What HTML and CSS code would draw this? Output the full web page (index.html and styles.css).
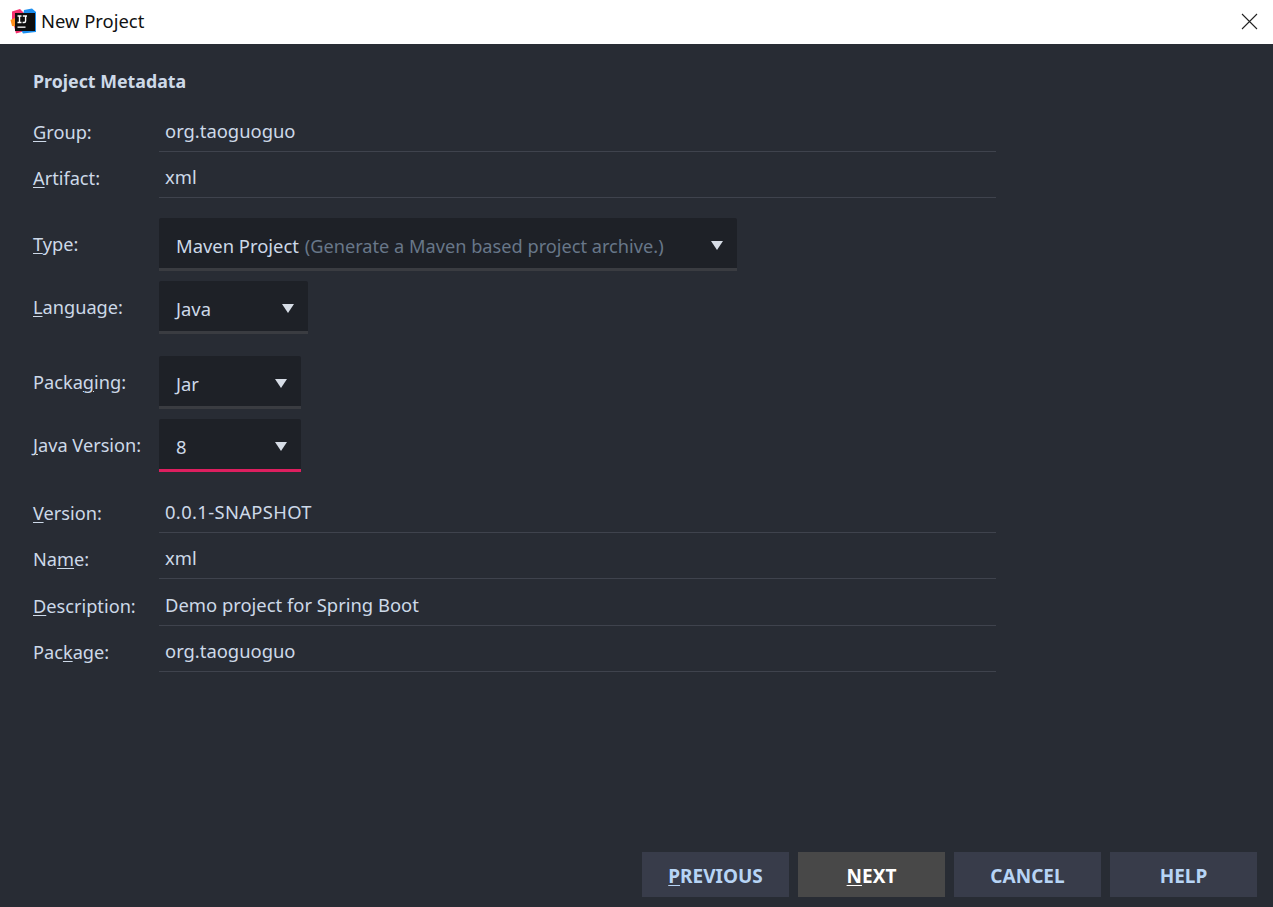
FILE: index.html
```html
<!DOCTYPE html>
<html lang="en">
<head>
<meta charset="utf-8">
<title>New Project</title>
<link rel="stylesheet" href="styles.css">
</head>
<body>
<div class="dialog">
  <header class="titlebar">
    <div class="title-left">
      <svg class="logo" width="26" height="26" viewBox="0 0 26 26">
        <path d="M2 3.5 L10 1 L15 6 L15 23 L6 25.5 L4 18 L2 12 Z" fill="#f5316f"/>
        <path d="M0.5 12 L6 9.5 L6 18.5 L2 18 Z" fill="#ff8f1c"/>
        <path d="M14 2 L22 0.5 L26 4 L26 24 L13 25.5 L11 22 Z" fill="#1c8ff0"/>
        <rect x="5" y="5" width="20" height="18" fill="#0f0f0f"/>
        <path d="M7.5 8 H11.5 M9.5 8 V14.5 M7.5 14.5 H11.5 M12.8 8 H17 M15.6 8 V13 Q15.6 14.5 14.2 14.5 H12.6" fill="none" stroke="#fff" stroke-width="1.4"/>
        <rect x="7.5" y="18.5" width="8" height="1.3" fill="#fff"/>
      </svg>
      <span class="title">New Project</span>
    </div>
    <svg class="close" width="17" height="17" viewBox="0 0 17 17"><path d="M1 1 L16 16 M16 1 L1 16" stroke="#222" stroke-width="1.1" fill="none"/></svg>
  </header>
  <main class="content">
    <h1 class="section">Project Metadata</h1>
    <div class="row field tall"><label class="lbl"><u>G</u>roup:</label><div class="input">org.taoguoguo</div></div>
    <div class="row field"><label class="lbl"><u>A</u>rtifact:</label><div class="input">xml</div></div>
    <div class="row sel-row type"><label class="lbl"><u>T</u>ype:</label><div class="select w-type"><span>Maven Project <span class="hint">(Generate a Maven based project archive.)</span></span><i class="arrow"></i></div></div>
    <div class="row sel-row lang"><label class="lbl"><u>L</u>anguage:</label><div class="select w-lang"><span>Java</span><i class="arrow"></i></div></div>
    <div class="row sel-row pack"><label class="lbl">Packa<u>g</u>ing:</label><div class="select w-pack"><span>Jar</span><i class="arrow"></i></div></div>
    <div class="row sel-row java"><label class="lbl"><u>J</u>ava Version:</label><div class="select w-pack focused"><span>8</span><i class="arrow"></i></div></div>
    <div class="row field tall version"><label class="lbl"><u>V</u>ersion:</label><div class="input caps">0.0.1-SNAPSHOT</div></div>
    <div class="row field"><label class="lbl">Na<u>m</u>e:</label><div class="input">xml</div></div>
    <div class="row field tall"><label class="lbl"><u>D</u>escription:</label><div class="input">Demo project for Spring Boot</div></div>
    <div class="row field"><label class="lbl">Pac<u>k</u>age:</label><div class="input">org.taoguoguo</div></div>
  </main>
  <footer class="actions">
    <button class="btn"><u>P</u>REVIOUS</button>
    <button class="btn primary"><u>N</u>EXT</button>
    <button class="btn">CANCEL</button>
    <button class="btn">HELP</button>
  </footer>
</div>
</body>
</html>
```
FILE: styles.css
```css
* { box-sizing: border-box; }
html, body { margin: 0; height: 100%; }
body { font-family: "Noto Sans", "Open Sans", sans-serif; font-size: 18.4px; color: #cdd9e8; background: #282c34; overflow: hidden; }
.dialog { height: 907px; display: flex; flex-direction: column; }
.titlebar { height: 44px; flex: none; background: #fff; display: flex; align-items: center; justify-content: space-between; padding: 0 15px 0 10px; }
.title-left { display: flex; align-items: center; gap: 5px; }
.logo { display: block; margin-bottom: 2px; }
.title { color: #111; font-size: 18.4px; line-height: 24px; margin-top: -3px; }
.close { display: block; margin-bottom: 2px; }
.content { flex: 1; padding: 0 0 0 33px; }
.section { margin: 24px 0 0; height: 37px; font-size: 17.8px; font-weight: 700; line-height: 26px; color: #cdd9e8; }
.row { display: flex; align-items: center; }
.lbl { width: 126px; flex: none; line-height: 24px; font-size: 18.2px; }
.lbl u { text-underline-offset: 2px; text-decoration-thickness: 1px; }
.field { height: 46px; width: 963px; }
.tall { height: 47px; }
.field .lbl { margin-top: 6px; }
.input { flex: 1; height: 100%; border-bottom: 1px solid #3f434d; padding: 5px 0 0 6px; display: flex; align-items: center; line-height: 24px; }
.caps { letter-spacing: 0.35px; }
.sel-row .lbl { margin-top: -1px; }
.type { margin-top: 20px; }
.lang { margin-top: 10px; }
.pack { margin-top: 22px; }
.java { margin-top: 10px; }
.version { margin-top: 14px; }
.select { height: 53px; background: #1e2127; border-bottom: 3px solid #3a3c41; border-radius: 2px 2px 0 0; display: flex; align-items: center; justify-content: space-between; padding: 4px 14px 0 17px; }
.w-type { width: 578px; }
.w-lang { width: 149px; }
.w-pack { width: 142px; }
.focused { border-bottom-color: #dd1f5f; }
.hint { color: #687789; font-size: 18.2px; margin-left: 1px; }
.arrow { width: 0; height: 0; border-left: 6px solid transparent; border-right: 6px solid transparent; border-top: 9px solid #d7dde6; flex: none; }
.actions { flex: none; display: flex; justify-content: flex-end; gap: 9px; padding: 0 16px 10px 0; }
.btn { width: 147px; height: 45px; border: 0; background: #383c4a; color: #b7d4f5; font-family: inherit; font-size: 19px; font-weight: 700; padding: 2px 0 0; }
.btn u { text-underline-offset: 2px; text-decoration-thickness: 1px; }
.primary { background: #484848; color: #fff; }
```
